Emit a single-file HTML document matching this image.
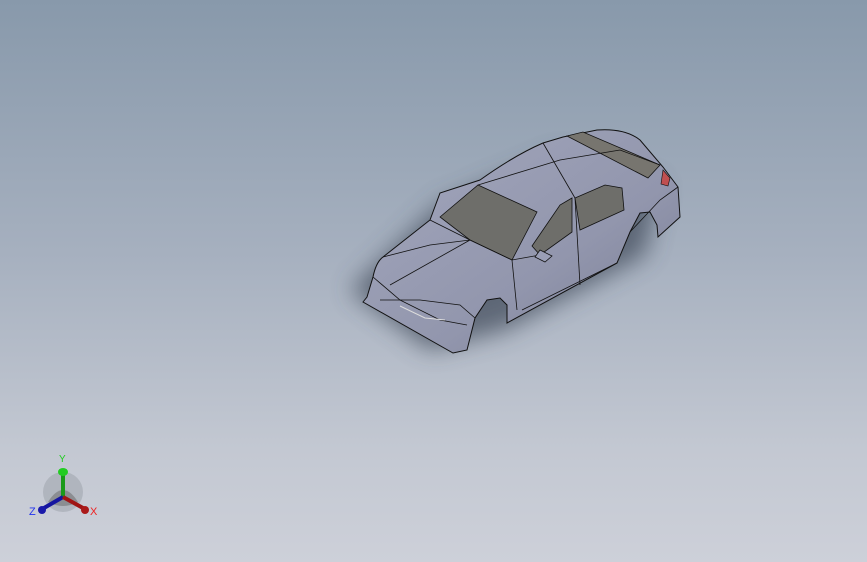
<!DOCTYPE html>
<html><head><style>
html,body{margin:0;padding:0;}
body{width:867px;height:562px;overflow:hidden;background:linear-gradient(180deg,#8899ab 0%,#a6b0bf 45%,#c3c8d2 80%,#cdd0d9 100%);font-family:"Liberation Sans",sans-serif;}
svg{position:absolute;left:0;top:0;}
</style></head><body>
<svg width="867" height="562" viewBox="0 0 867 562">
<defs>
<filter id="bl" x="-50%" y="-50%" width="200%" height="200%"><feGaussianBlur stdDeviation="12"/></filter>
<linearGradient id="body" x1="0" y1="0" x2="1" y2="1">
<stop offset="0" stop-color="#a3a7bd"/><stop offset="0.6" stop-color="#9296ad"/><stop offset="1" stop-color="#787c92"/></linearGradient>
</defs>
<path d="M350,290 L440,205 L560,155 L660,185 L645,255 L505,330 L430,350 Z" fill="#3e4656" opacity="0.7" filter="url(#bl)"/>
<path d="M363,302 L367,297 L373,277 Q376,262 383,257 L430,220 L440,193 L480,180 Q515,155 543,143 L563,137 L597,130 Q625,128 640,140 L663,167 L678,187 L680,217 L658,237 L657,225 L650,212 L640,213 L630,232 L617,263 L507,323 L507,305 L500,298 L487,300 L475,318 L467,350 L453,353 Z" fill="url(#body)" stroke="#111" stroke-width="1"/>
<path d="M440,217 L478,185 L537,212 L512,260 L470,240 Z" fill="#6e6e6a" stroke="#111" stroke-width="0.8"/>
<path d="M567,136 L583,132 L660,165 L648,178 Z" fill="#77756f" stroke="#111" stroke-width="0.8"/>
<path d="M532,246 L560,205 L572,198 L572,232 L540,255 Z" fill="#6e6e6a" stroke="#111" stroke-width="0.8"/>
<path d="M575,198 L605,185 L622,188 L624,210 L580,230 Z" fill="#6e6e6a" stroke="#111" stroke-width="0.8"/>
<g fill="none" stroke="#111" stroke-width="0.8">
<path d="M383,257 L430,245 L470,240 L512,260 L540,255"/>
<path d="M430,220 L470,240"/>
<path d="M390,285 L470,240"/>
<path d="M380,300 L420,300 L460,305 L475,318"/>
<path d="M512,260 L517,310"/>
<path d="M575,198 L580,285"/>
<path d="M522,310 L617,263"/>
<path d="M543,143 L575,198"/>
<path d="M478,185 L560,160 L620,150 L660,165"/>
<path d="M373,277 L400,300 L440,320 L467,325"/>
<path d="M630,232 L660,200 L678,187"/>
</g>
<path d="M540,250 L552,256 L545,262 L535,257 Z" fill="#9a9eb6" stroke="#111" stroke-width="0.8"/>
<path d="M663,170 L670,178 L668,186 L661,184 Z" fill="#c05050" stroke="#111" stroke-width="0.6"/>
<path d="M400,306 L425,318 L445,320" fill="none" stroke="#ddd" stroke-width="1"/>
<circle cx="63" cy="492" r="20" fill="#9aa0a8" opacity="0.5"/>
<path d="M48,502 Q63,478 78,502 Q63,510 48,502Z" fill="#666" opacity="0.5"/>
<line x1="63" y1="497" x2="63" y2="473" stroke="#1a9a1a" stroke-width="4"/>
<ellipse cx="63" cy="472" rx="5" ry="4" fill="#22cc22"/>
<line x1="63" y1="497" x2="44" y2="508" stroke="#1515a0" stroke-width="4"/>
<ellipse cx="42" cy="510" rx="4" ry="4" fill="#1a1aaa"/>
<line x1="63" y1="497" x2="83" y2="508" stroke="#a01515" stroke-width="4"/>
<ellipse cx="85" cy="510" rx="4" ry="4" fill="#aa1a1a"/>
<text x="59" y="462" font-size="10" fill="#22cc22">Y</text>
<text x="29" y="515" font-size="11" fill="#2233ee">Z</text>
<text x="90" y="515" font-size="11" fill="#ee2222">X</text>
</svg>
</body></html>
